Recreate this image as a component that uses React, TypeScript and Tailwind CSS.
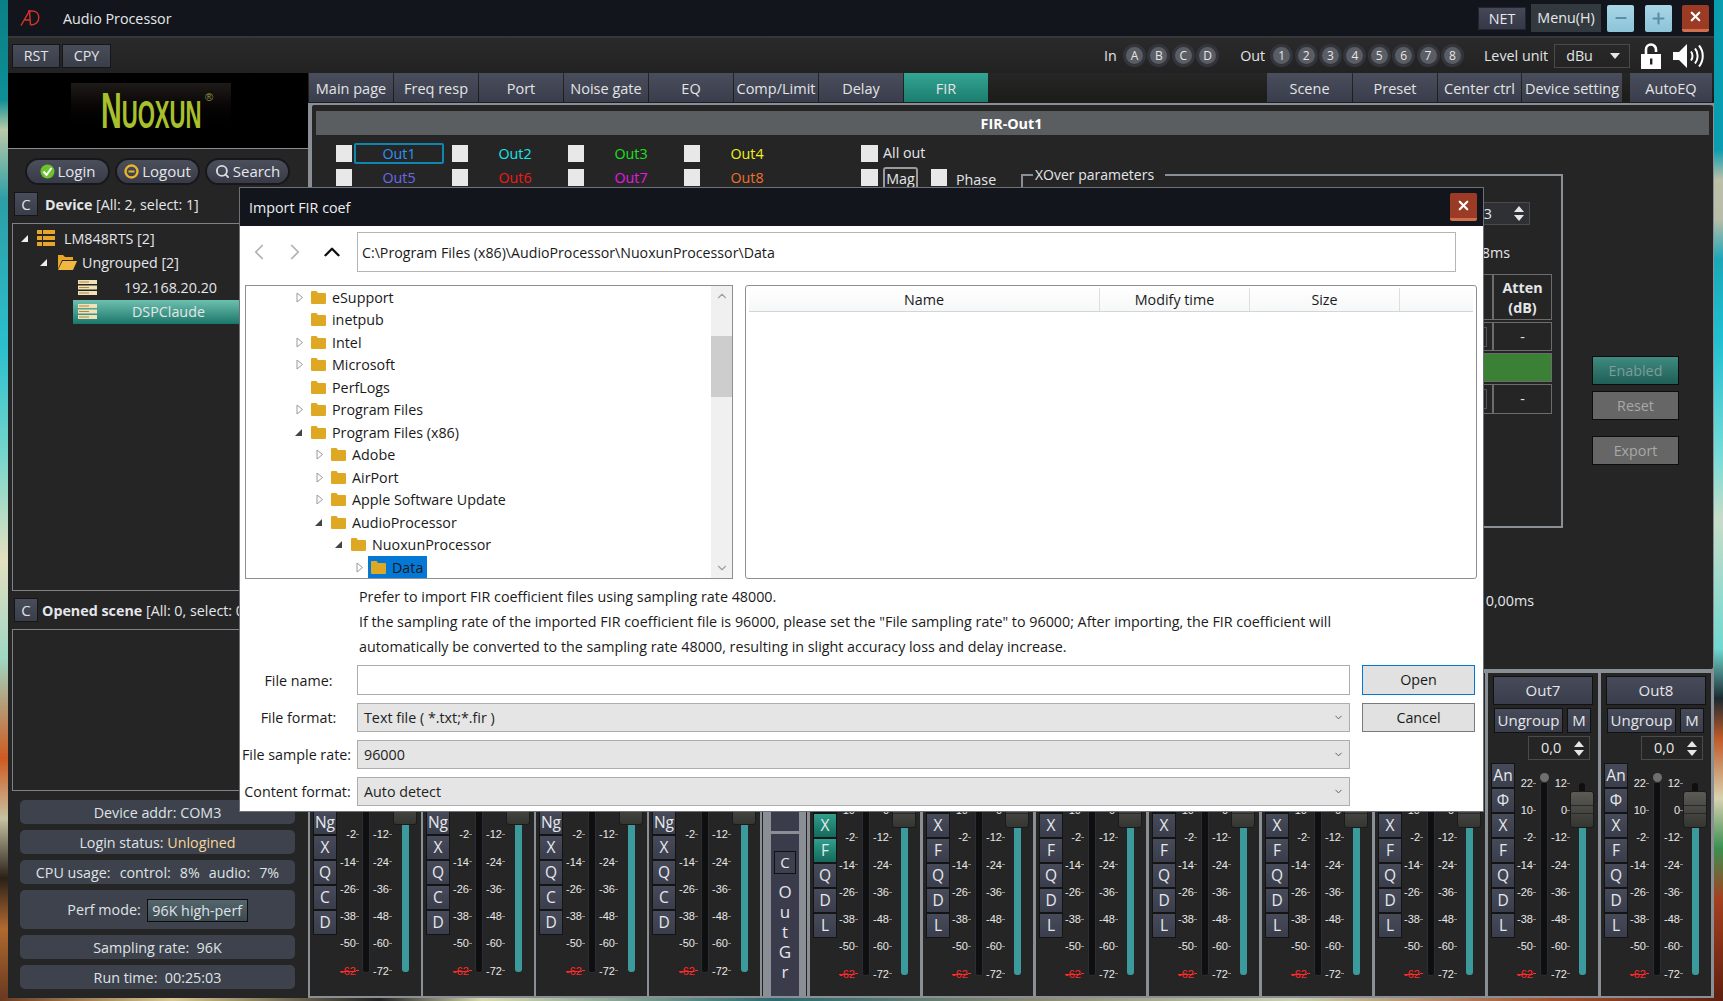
import { ChevronDown, ChevronLeft, ChevronRight, ChevronUp, Search, X, Minus, Plus } from "lucide-react"

const leftTabs = ["Main page", "Freq resp", "Port", "Noise gate", "EQ", "Comp/Limit", "Delay", "FIR"]
const rightTabs = [
  { label: "Scene", width: "w-[85px]" },
  { label: "Preset", width: "w-[84px]" },
  { label: "Center ctrl", width: "w-[83px]" },
  { label: "Device setting", width: "w-[100px]" },
]
const leftScale = ["22", "10", "-2", "-14", "-26", "-38", "-50", "-62"]
const rightScale = ["12", "0", "-12", "-24", "-36", "-48", "-60", "-72"]

const outRows = [
  [
    { name: "Out1", color: "text-[#2a94f4]", selected: true },
    { name: "Out2", color: "text-[#19e6e6]" },
    { name: "Out3", color: "text-[#1fe01f]" },
    { name: "Out4", color: "text-[#f2f21a]" },
  ],
  [
    { name: "Out5", color: "text-[#6a6af0]" },
    { name: "Out6", color: "text-[#f01a1a]" },
    { name: "Out7", color: "text-[#e61ae6]" },
    { name: "Out8", color: "text-[#f0702a]" },
  ],
]

const folderRows = [
  { name: "eSupport", level: 0, arrow: "closed" },
  { name: "inetpub", level: 0 },
  { name: "Intel", level: 0, arrow: "closed" },
  { name: "Microsoft", level: 0, arrow: "closed" },
  { name: "PerfLogs", level: 0 },
  { name: "Program Files", level: 0, arrow: "closed" },
  { name: "Program Files (x86)", level: 0, arrow: "open" },
  { name: "Adobe", level: 1, arrow: "closed" },
  { name: "AirPort", level: 1, arrow: "closed" },
  { name: "Apple Software Update", level: 1, arrow: "closed" },
  { name: "AudioProcessor", level: 1, arrow: "open" },
  { name: "NuoxunProcessor", level: 2, arrow: "open" },
  { name: "Data", level: 3, arrow: "closed", selected: true },
]

const levelPad = ["pl-[50px]", "pl-[70px]", "pl-[90px]", "pl-[110px]"]

function Folder() {
  return (
    <svg width="15" height="13" viewBox="0 0 15 13" className="shrink-0">
      <path d="M1 0h4.5l1.5 2h7a1 1 0 0 1 1 1v9a1 1 0 0 1-1 1H1a1 1 0 0 1-1-1V1a1 1 0 0 1 1-1z" fill="#dfa823" />
    </svg>
  )
}

function TreeArrow({ state }: { state?: string }) {
  if (state === "closed") {
    return (
      <svg width="8" height="11" viewBox="0 0 8 11" className="shrink-0">
        <path d="M1 1l5.5 4.5L1 10z" fill="#fff" stroke="#9a9a9a" />
      </svg>
    )
  }
  if (state === "open") {
    return (
      <svg width="9" height="9" viewBox="0 0 9 9" className="shrink-0 -translate-x-[2px]">
        <path d="M8 1v7H1z" fill="#444" />
      </svg>
    )
  }
  return <span className="w-[8px] shrink-0" />
}

function ServerIcon() {
  return (
    <svg width="19" height="15" viewBox="0 0 19 15" className="shrink-0">
      <rect width="19" height="4" fill="#f0e2b8" />
      <rect y="5.5" width="19" height="4" fill="#f0e2b8" />
      <rect y="11" width="19" height="4" fill="#f0e2b8" />
      <rect x="1" y="1.5" width="10" height="1" fill="#b08a40" />
      <rect x="1" y="7" width="10" height="1" fill="#b08a40" />
      <rect x="1" y="12.5" width="10" height="1" fill="#b08a40" />
    </svg>
  )
}

function Pill({ icon, label }: { icon: React.ReactNode; label: string }) {
  return (
    <button className="flex h-[27px] w-[85px] items-center justify-center gap-[3px] rounded-full border-2 border-[#17181b] bg-gradient-to-b from-[#4b4f5c] to-[#383b47] text-[15px] text-[#e4e6ea]">
      {icon}
      {label}
    </button>
  )
}

function SquareC() {
  return (
    <button className="flex h-[24px] w-[24px] shrink-0 items-center justify-center border border-[#15161a] bg-gradient-to-b from-[#494d5a] to-[#3a3d4a] text-[15px] text-[#dfe2e6]">
      C
    </button>
  )
}

function Circle({ label }: { label: string }) {
  return (
    <span className="flex h-[23px] w-[23px] items-center justify-center rounded-full border-[3px] border-[#33353c] bg-[#5a5d64] text-[12px] text-[#e6e6e6]">
      {label}
    </span>
  )
}

function UpDown() {
  return (
    <span className="flex flex-col items-center gap-[3px]">
      <span className="h-0 w-0 border-x-[5px] border-b-[6px] border-x-transparent border-b-[#e6e6e6]" />
      <span className="h-0 w-0 border-x-[5px] border-t-[6px] border-x-transparent border-t-[#e6e6e6]" />
    </span>
  )
}

// labels the dialog covers stay empty, hidden says how many from the top
function ScaleColumn({ values, width, hidden }: { values: string[]; width: string; hidden: number }) {
  return (
    <div className={`mt-[13px] flex h-[205px] flex-col justify-between font-['Liberation_Sans',sans-serif] text-[11px] ${width}`}>
      {values.map((v, i) => (
        <span key={v} className={`flex h-[14px] items-center justify-end ${v === "-62" ? "text-[#ff2a2a]" : "text-[#e8e8e8]"}`}>
          {i >= hidden && (
            <>
              <span className={v === "-62" ? "line-through" : ""}>{v}</span>
              <span className={`h-px w-[3px] ${v === "-62" ? "bg-[#ff2a2a]" : "bg-[#8d8d8d]"}`} />
            </>
          )}
        </span>
      ))}
    </div>
  )
}

function Strip({ name, kind, active, covered }: { name: string; kind: "in" | "out"; active?: boolean; covered?: boolean }) {
  const keys = kind === "in" ? ["An", "Φ", "Ng", "X", "Q", "C", "D"] : ["An", "Φ", "X", "F", "Q", "D", "L"]
  const hidden = !covered ? 0 : kind === "in" ? 2 : 1
  return (
    <div className={`flex h-full shrink-0 flex-col bg-[#252525] ${kind === "in" ? "w-[111px]" : "w-[110px]"}`}>
      {covered ? (
        <div className="h-[87px] shrink-0" />
      ) : (
        <>
          <button className="mx-[5px] mt-[3px] h-[29px] border border-[#111] bg-gradient-to-b from-[#474b59] to-[#3a3d4b] text-[15px] text-[#e4e6ea]">
            {name}
          </button>
          <div className="mx-[6px] mt-[3px] flex h-[25px] gap-[4px]">
            <button className="w-[69px] border border-[#111] bg-gradient-to-b from-[#474b59] to-[#3a3d4b] text-[15px] text-[#e4e6ea]">Ungroup</button>
            <button className="w-[24px] border border-[#111] bg-gradient-to-b from-[#474b59] to-[#3a3d4b] text-[15px] text-[#e4e6ea]">M</button>
          </div>
          <div className="ml-[40px] mt-[3px] flex h-[24px] w-[62px] items-center justify-between border border-[#4a4a4a] pl-[12px] pr-[5px] text-[14.5px] text-[#e8e8e8]">
            0,0
            <UpDown />
          </div>
        </>
      )}
      <div className={kind === "in" ? "mt-0 flex pl-[3px]" : "mt-[3px] flex pl-[3px]"}>
        <div className="flex w-[24px] shrink-0 flex-col">
          {keys.map((k) => {
            const on = active && (k === "X" || k === "F")
            const blank = covered && (k === "An" || k === "Φ")
            return (
              <button
                key={k}
                className={`flex h-[25px] items-center justify-center border border-[#141414] bg-gradient-to-b text-[15.5px] text-[#e6e8ec] ${
                  on ? "from-[#2fa08c] to-[#146a5c]" : "from-[#474b59] to-[#3a3d4b]"
                }`}
              >
                {blank ? "" : k}
              </button>
            )
          })}
        </div>
        <ScaleColumn values={leftScale} width={kind === "in" ? "w-[22px]" : "w-[21px]"} hidden={hidden} />
        <div className={`mt-[10px] flex w-[8px] shrink-0 flex-col items-center ${kind === "in" ? "ml-[3px]" : "ml-[4px]"}`}>
          <span className="h-[9px] w-[9px] rounded-full bg-[#6f6f6f]" />
          <span className="h-[194px] w-[8px] rounded-b-[3px] border border-[#2a2d36] bg-[#0f0f10]" />
        </div>
        <ScaleColumn values={rightScale} width="w-[22px]" hidden={hidden} />
        <div className={`mt-[20px] flex w-[24px] shrink-0 flex-col items-center ${kind === "in" ? "ml-px" : ""}`}>
          <span className="h-[8px] w-[6px] rounded-t-[3px] bg-[#0f0f10]" />
          <span className="flex h-[37px] w-[24px] flex-col justify-center gap-[7px] rounded-[3px] border border-[#1b1b1b] bg-gradient-to-b from-[#5c5b56] to-[#353532]">
            <span className="h-px bg-[#2a2a28]" />
            <span className="h-px bg-[#2a2a28]" />
          </span>
          <span className="h-[147px] w-[7px] rounded-b-[3px] bg-[#3a9a9c]" />
        </div>
      </div>
    </div>
  )
}

function FormSelect({ value }: { value: string }) {
  return (
    <div className="flex h-[29px] items-center justify-between border border-[#adadad] bg-[#e5e5e5] pl-[6px] pr-[5px] text-[#222]">
      {value}
      <ChevronDown size={11} className="text-[#555]" />
    </div>
  )
}

function Dialog() {
  return (
    <div className="absolute left-[239px] top-[187px] flex h-[625px] w-[1245px] flex-col border border-[#6e7278] bg-white text-[14.3px] text-[#1a1a1a]">
      <div className="flex h-[38px] shrink-0 items-center justify-between bg-[#12161c] pl-[9px] pr-[6px] text-[#eceef0]">
        <span className="pt-px">Import FIR coef</span>
        <button className="flex h-[28px] w-[27px] items-center justify-center rounded-[2px] border-b-[3px] border-[#cf6f4e] bg-[#9b3a25] text-white">
          <X size={15} strokeWidth={3.5} />
        </button>
      </div>
      <div className="ml-[6px] mt-[6px] flex h-[40px] items-center">
        <ChevronLeft size={26} strokeWidth={1.6} className="text-[#b0b0b0]" />
        <ChevronRight size={26} strokeWidth={1.6} className="ml-[10px] text-[#b0b0b0]" />
        <ChevronUp size={26} strokeWidth={2.2} className="ml-[11px] text-[#111]" />
        <div className="ml-[12px] flex h-[40px] w-[1099px] items-center border border-[#b5b5b5] pl-[4px] pt-px text-[14.2px]">
          C:\Program Files (x86)\AudioProcessor\NuoxunProcessor\Data
        </div>
      </div>
      <div className="ml-[5px] mt-[13px] flex h-[294px] gap-[12px]">
        <div className="flex w-[488px] border border-[#8c8f94]">
          <div className="flex-1 overflow-hidden">
            {folderRows.map((row) => (
              <div key={row.name} className={`flex h-[22.5px] items-center ${levelPad[row.level]}`}>
                <span className="flex w-[15px] shrink-0">
                  <TreeArrow state={row.arrow} />
                </span>
                {row.selected ? (
                  <span className="-ml-[3px] flex h-[22px] items-center gap-[6px] bg-[#0378d7] pl-[3px] pr-[4px]">
                    <Folder />
                    Data
                  </span>
                ) : (
                  <span className="flex items-center gap-[6px]">
                    <Folder />
                    {row.name}
                  </span>
                )}
              </div>
            ))}
          </div>
          <div className="flex w-[21px] flex-col items-center justify-between bg-[#f0f0f0] text-[#a0a0a0]">
            <ChevronUp size={14} className="mt-[3px]" />
            <span className="mb-auto mt-[33px] h-[61px] w-full bg-[#cdcdcd]" />
            <ChevronDown size={14} className="mb-[3px]" />
          </div>
        </div>
        <div className="w-[732px] rounded-[3px] border border-[#8c8f94] px-[3px] pt-px">
          <div className="flex h-[25px] border-b border-[#d5d5d5] bg-gradient-to-b from-white to-[#f6f7f8] pt-px">
            <span className="flex w-[351px] items-center justify-center border-r border-[#dedede]">Name</span>
            <span className="flex w-[150px] items-center justify-center border-r border-[#dedede]">Modify time</span>
            <span className="flex w-[150px] items-center justify-center border-r border-[#dedede]">Size</span>
          </div>
        </div>
      </div>
      <div className="pl-[119px] pt-[5px] leading-[25px]">
        <p>Prefer to import FIR coefficient files using sampling rate 48000.</p>
        <p>If the sampling rate of the imported FIR coefficient file is 96000, please set the "File sampling rate" to 96000; After importing, the FIR coefficient will</p>
        <p>automatically be converted to the sampling rate 48000, resulting in slight accuracy loss and delay increase.</p>
      </div>
      <div className="mt-[6px] grid grid-cols-[117px_993px_125px] gap-y-[8px]">
        <span className="flex h-[30px] items-center justify-center whitespace-nowrap pt-px">File name:</span>
        <div className="h-[30px] border border-[#adadad] bg-white" />
        <button className="ml-[12px] h-[30px] w-[113px] border border-[#0078d7] bg-[#e1e1e1]">Open</button>
        <span className="flex h-[29px] items-center justify-center whitespace-nowrap">File format:</span>
        <FormSelect value="Text file ( *.txt;*.fir )" />
        <button className="ml-[12px] h-[29px] w-[113px] border border-[#7a7a7a] bg-[#e1e1e1]">Cancel</button>
        <span className="-ml-[4px] flex h-[29px] items-center justify-center whitespace-nowrap">File sample rate:</span>
        <FormSelect value="96000" />
        <span />
        <span className="-ml-[2px] flex h-[29px] items-center justify-center whitespace-nowrap">Content format:</span>
        <FormSelect value="Auto detect" />
        <span />
      </div>
    </div>
  )
}

export default function App() {
  const rowBg = "flex items-center justify-center rounded-[5px] bg-[#3e424c] pt-px text-[14.3px] text-[#dfe2e6]"
  return (
    <div className="relative flex h-[1001px] w-[1723px] flex-col overflow-hidden bg-[#222] font-['Open_Sans',sans-serif]">
      <div className="flex h-[998px]">
        <div className="w-[8px] bg-[linear-gradient(180deg,#0b7f86_0%,#0e8f96_10%,#b9c9a8_13%,#2c9ea6_20%,#2cc0ce_35%,#7ad6cc_46%,#e4e0c0_56%,#9fd6c4_66%,#cf5a20_76%,#c6c2a2_82%,#2a2018_88%,#b06a30_93%,#6a3a20_100%)]" />
        <div className="flex w-[1706px] flex-col">
          <div className="flex h-[38px] shrink-0 items-center border-b-2 border-[#33363a] bg-[#12161c] pl-[12px] pr-[5px] text-[14.3px] text-[#e6e8ea]">
            <svg width="20" height="16" viewBox="0 0 20 16" fill="none" stroke="#d8322a" strokeWidth="1.4">
              <path d="M1 15.5 9.5.8l1 14.4M4.5 10h6" />
              <path d="M8 1h4c4.5 0 6.8 3 6.8 6.6 0 4-2.8 7.4-8 7.4" />
            </svg>
            <span className="ml-[23px] pt-px">Audio Processor</span>
            <button className="ml-auto h-[23px] w-[48px] border border-[#232630] bg-gradient-to-b from-[#444857] to-[#353846]">NET</button>
            <button className="ml-[5px] h-[28px] w-[70px] bg-[#333a3f]">Menu(H)</button>
            <button className="ml-[6px] flex h-[27px] w-[27px] items-center justify-center rounded-[2px] bg-gradient-to-b from-[#a8d6e6] to-[#8cc4d8] text-[#5b8ea6]">
              <Minus size={16} strokeWidth={3} />
            </button>
            <button className="ml-[11px] flex h-[27px] w-[27px] items-center justify-center rounded-[2px] bg-gradient-to-b from-[#a8d6e6] to-[#8cc4d8] text-[#5b8ea6]">
              <Plus size={17} strokeWidth={3} />
            </button>
            <button className="ml-[10px] flex h-[27px] w-[27px] items-center justify-center rounded-[2px] border-b-[3px] border-[#cf6f4e] bg-[#9b3a25] text-white">
              <X size={15} strokeWidth={3.5} />
            </button>
          </div>
          <div className="flex h-[35px] shrink-0 items-center bg-gradient-to-b from-[#2a2a2a] to-[#222] pl-[4px] text-[14.3px] text-[#e2e4e6]">
            <button className="h-[24px] w-[48px] border border-[#15161a] bg-gradient-to-b from-[#494d5a] to-[#3a3d4a]">RST</button>
            <button className="ml-[2px] h-[24px] w-[49px] border border-[#15161a] bg-gradient-to-b from-[#494d5a] to-[#3a3d4a]">CPY</button>
            <span className="ml-[993px] w-[18px]">In</span>
            <div className="ml-[1px] flex gap-[1.4px]">
              {["A", "B", "C", "D"].map((k) => (
                <Circle key={k} label={k} />
              ))}
            </div>
            <span className="ml-[21px]">Out</span>
            <div className="ml-[5px] flex gap-[1.4px]">
              {["1", "2", "3", "4", "5", "6", "7", "8"].map((k) => (
                <Circle key={k} label={k} />
              ))}
            </div>
            <span className="ml-[20px]">Level unit</span>
            <div className="ml-[6px] flex h-[24px] w-[76px] items-center justify-between border border-[#4a4a4a] pl-[11px] pr-[9px]">
              dBu
              <span className="h-0 w-0 border-x-[5px] border-t-[6px] border-x-transparent border-t-[#e6e6e6]" />
            </div>
            <svg width="22" height="26" viewBox="0 0 22 26" className="ml-[10px]" fill="none">
              <path d="M16 9V6.5a5 5 0 0 0-10 0V11" stroke="#fff" strokeWidth="2.6" />
              <rect x="1" y="11" width="20" height="15" fill="#fff" />
              <rect x="10" y="15.5" width="2.4" height="6" fill="#222" />
            </svg>
            <svg width="32" height="26" viewBox="0 0 32 26" className="ml-[10px]" fill="none">
              <path d="M1 9h6l8-8v24l-8-8H1z" fill="#fff" />
              <path d="M19 8.5c2 2.5 2 6.500 0 9M23 5.500c3.500 4 3.500 11 0 15M27 2.500c5 6 5 15 0 21" stroke="#fff" strokeWidth="2" />
            </svg>
          </div>
          <div className="flex min-h-0 flex-1">
            <aside className="flex w-[300px] shrink-0 flex-col bg-[#252525] text-[14.3px] text-[#e4e6ea]">
              <div className="flex h-[76px] shrink-0 items-center justify-center border-b border-[#8a8f96] bg-black pr-[14px]">
                <div className="relative flex h-[56px] w-[160px] items-center justify-center bg-gradient-to-b from-[#1e1a18] to-black font-['Liberation_Sans',sans-serif] font-bold text-[#a8c02c]">
                  <span className="flex origin-center scale-x-[0.65] scale-y-[1.15] items-baseline">
                    <span className="text-[44px] leading-none">N</span>
                    <span className="text-[34px] leading-none">UOXUN</span>
                  </span>
                  <span className="absolute right-[18px] top-[9px] text-[11px] font-normal leading-none text-[#8c9a40]">®</span>
                </div>
              </div>
              <div className="ml-[17px] mt-[9px] flex gap-[5px]">
                <Pill
                  label="Login"
                  icon={
                    <svg width="15" height="15" viewBox="0 0 15 15">
                      <circle cx="7.500" cy="7.500" r="7" fill="#6cc42c" />
                      <path d="M3.500 7.500 6.500 11l5-7" fill="none" stroke="#fff" strokeWidth="2" />
                    </svg>
                  }
                />
                <Pill
                  label="Logout"
                  icon={
                    <svg width="15" height="15" viewBox="0 0 15 15">
                      <circle cx="7.500" cy="7.500" r="6" fill="none" stroke="#e8b52c" strokeWidth="2.400" />
                      <rect x="4.500" y="6.500" width="6" height="2" fill="#e8b52c" />
                    </svg>
                  }
                />
                <Pill label="Search" icon={<Search size={15} strokeWidth={3} className="text-[#d8dce0]" />} />
              </div>
              <div className="ml-[6px] mt-[7px] flex items-center gap-[7px]">
                <SquareC />
                <span className="pt-px">
                  <b>Device</b> [All: 2, select: 1]
                </span>
              </div>
              <div className="ml-[4px] mt-[7px] h-[368px] w-[292px] border border-[#7e8287] pt-[2px]">
                <div className="flex h-[24.5px] items-center pl-[7px]">
                  <svg width="9" height="9" viewBox="0 0 9 9"><path d="M8 1v7H1z" fill="#eee" /></svg>
                  <svg width="18" height="16" viewBox="0 0 18 16" className="ml-[8px]" fill="#e8a52a">
                    <rect width="5" height="4" />
                    <rect x="6" width="12" height="4" />
                    <rect y="6" width="5" height="4" />
                    <rect x="6" y="6" width="12" height="4" />
                    <rect y="12" width="5" height="4" />
                    <rect x="6" y="12" width="12" height="4" />
                  </svg>
                  <span className="ml-[9px]">LM848RTS [2]</span>
                </div>
                <div className="flex h-[24.5px] items-center pl-[26px]">
                  <svg width="9" height="9" viewBox="0 0 9 9"><path d="M8 1v7H1z" fill="#eee" /></svg>
                  <svg width="20" height="15" viewBox="0 0 20 15" className="ml-[9px]">
                    <path d="M1 0h5l2 2h8v3H5L1 14z" fill="#e8a52a" />
                    <path d="M5.500 6H20l-4 9H1z" fill="#f0b840" />
                  </svg>
                  <span className="ml-[5px]">Ungrouped [2]</span>
                </div>
                <div className="flex h-[24.5px] items-center pl-[65px]">
                  <ServerIcon />
                  <span className="ml-[27px]">192.168.20.20</span>
                </div>
                <div className="ml-[60px] flex h-[24.5px] items-center bg-gradient-to-b from-[#6cc0b0] to-[#16786a] pl-[5px]">
                  <ServerIcon />
                  <span className="ml-[35px]">DSPClaude</span>
                </div>
              </div>
              <div className="ml-[6px] mt-[7px] flex items-center gap-[4px]">
                <SquareC />
                <span className="whitespace-nowrap pt-[2px]">
                  <b>Opened scene</b> [All: 0, select: 0]
                </span>
              </div>
              <div className="ml-[4px] mt-[7px] h-[162px] w-[292px] border border-[#7e8287]" />
              <div className="ml-[12px] mt-[9px] flex w-[275px] flex-col gap-[6px]">
                <div className={`h-[24px] ${rowBg}`}>Device addr: COM3</div>
                <div className={`h-[24px] ${rowBg}`}>
                  Login status:&nbsp;<span className="text-[#f2d79c]">Unlogined</span>
                </div>
                <div className={`h-[24px] gap-[9px] ${rowBg}`}>
                  <span>CPU usage:</span>
                  <span>control:</span>
                  <span>8%</span>
                  <span>audio:</span>
                  <span>7%</span>
                </div>
                <div className={`h-[39px] gap-[6px] ${rowBg}`}>
                  Perf mode:
                  <button className="h-[23px] w-[101px] border border-[#0d0d0d] bg-gradient-to-b from-[#54666c] to-[#3c4a50]">96K high-perf</button>
                </div>
                <div className={`h-[24px] ${rowBg}`}>Sampling rate:&nbsp; 96K</div>
                <div className={`h-[24px] ${rowBg}`}>Run time:&nbsp; 00:25:03</div>
              </div>
            </aside>
            <main className="flex min-w-0 flex-1 flex-col bg-[#8a8f96]">
              <div className="flex h-[30px] shrink-0 bg-gradient-to-b from-[#262626] to-[#1b1b19] pl-px text-[14.5px] text-[#e2e4e6]">
                {leftTabs.map((tab) => (
                  <button
                    key={tab}
                    className={`mr-px w-[84px] whitespace-nowrap border-b border-[#1c1d22] bg-gradient-to-b pt-[2px] ${
                      tab === "FIR" ? "from-[#34a594] to-[#1c7d6e]" : "from-[#4a4e5c] to-[#3a3d4b]"
                    }`}
                  >
                    {tab}
                  </button>
                ))}
                <span className="flex-1" />
                {rightTabs.map((tab) => (
                  <button key={tab.label} className={`mr-px whitespace-nowrap border-b border-[#1c1d22] bg-gradient-to-b from-[#4a4e5c] to-[#3a3d4b] pt-[2px] ${tab.width}`}>
                    {tab.label}
                  </button>
                ))}
                <button className="ml-[7px] mr-[2px] w-[82px] border-b border-[#1c1d22] bg-gradient-to-b from-[#4a4e5c] to-[#3a3d4b] pt-[2px]">AutoEQ</button>
              </div>
              <section className="ml-[2px] flex h-[568px] shrink-0 flex-col rounded-t-[4px] rounded-br-[4px] border-2 border-r-[1px] border-[#8a8f96] bg-[#252525] text-[14.3px] text-[#e4e6ea]">
                <div className="mx-[4px] mt-[6px] flex h-[24px] shrink-0 items-center justify-center bg-[#5a5e61] pr-[2px] pt-px font-bold text-white">FIR-Out1</div>
                <div className="flex flex-1">
                  <div className="w-[709px] pl-[24px] pt-[10px]">
                    {outRows.map((row, r) => (
                      <div key={r} className={`flex ${r === 0 ? "h-[17px]" : "mt-[7px] h-[17px]"}`}>
                        {row.map((o) => (
                          <div key={o.name} className="flex w-[116px] items-center">
                            <span className="h-[17px] w-[16px] shrink-0 bg-[#e8e8e8]" />
                            <span
                              className={`ml-[2px] flex h-[21px] w-[90px] items-center justify-center ${o.color} ${
                                o.selected ? "rounded-[2px] border-2 border-[#0e86b0]" : ""
                              }`}
                            >
                              {o.name}
                            </span>
                          </div>
                        ))}
                        {r === 0 ? (
                          <div className="ml-[61px] flex items-center">
                            <span className="h-[17px] w-[17px] bg-[#e8e8e8]" />
                            <span className="ml-[5px] -translate-y-px">All out</span>
                          </div>
                        ) : (
                          <div className="ml-[61px] flex items-center">
                            <span className="h-[17px] w-[17px] bg-[#e8e8e8]" />
                            <span className="ml-[5px] flex h-[24px] w-[35px] translate-y-px items-center justify-center rounded-t-[3px] border-2 border-[#9a9a9a]">Mag</span>
                            <span className="ml-[13px] h-[17px] w-[16px] bg-[#e8e8e8]" />
                            <span className="ml-[9px] translate-y-[2px]">Phase</span>
                          </div>
                        )}
                      </div>
                    ))}
                  </div>
                  <div className="flex w-[542px] flex-col">
                    <div className="relative mt-[39px] flex h-[354px] flex-col items-end border-2 border-[#8a8f96]">
                      <span className="absolute -top-[12px] left-[10px] bg-[#252525] pl-[2px] pr-[11px] text-[14px]">XOver parameters</span>
                      <div className="mr-[31px] mt-[26px] flex h-[23px] w-[120px] items-center justify-end border border-[#4a4a4a] bg-[#2f3036] pr-[5px]">
                        <span className="mr-[22px]">33</span>
                        <UpDown />
                      </div>
                      <span className="mr-[51px] mt-[17px] h-[20px]">8ms</span>
                      <div className="mr-[9px] mt-[12px] grid w-[300px] grid-cols-[1fr_59px] gap-y-[2px] text-center">
                        <div className="h-[46px] border border-[#6c6c6c]" />
                        <div className="h-[46px] border border-[#6c6c6c] pt-[3px] font-bold leading-[20px]">
                          Atten
                          <br />
                          (dB)
                        </div>
                        <div className="flex h-[29px] items-center justify-end border border-[#6c6c6c] pr-[5px]">
                          <span className="h-[20px] w-[5px] border border-[#555]" />
                        </div>
                        <div className="h-[29px] border border-[#6c6c6c] leading-[27px]">-</div>
                        <div className="col-span-2 h-[29px] border border-[#6c6c6c] bg-[#3a8035]" />
                        <div className="flex h-[30px] items-center justify-end border border-[#6c6c6c] pr-[5px]">
                          <span className="h-[20px] w-[5px] border border-[#555]" />
                        </div>
                        <div className="h-[30px] border border-[#6c6c6c] leading-[28px]">-</div>
                      </div>
                    </div>
                    <span className="mr-[29px] mt-[62px] self-end">0,00ms</span>
                  </div>
                  <div className="ml-[29px] mt-[221px] flex w-[87px] flex-col">
                    <button className="h-[29px] border border-[#0d0d0d] bg-gradient-to-b from-[#3f8a80] to-[#1f5f58] text-[#7d9c98]">Enabled</button>
                    <button className="mt-[6px] h-[29px] border border-[#0d0d0d] bg-[#666] text-[#a8a8a8]">Reset</button>
                    <button className="mt-[16px] h-[29px] border border-[#0d0d0d] bg-[#666] text-[#a8a8a8]">Export</button>
                  </div>
                </div>
              </section>
              <div className="flex h-[326px] items-stretch pb-px pl-[2px] pt-[2px]">
                <div className="flex gap-[2px]">
                  {["InA", "InB", "InC", "InD"].map((n) => (
                    <Strip key={n} name={n} kind="in" covered />
                  ))}
                </div>
                <span className="ml-[2px] w-px bg-[#222]" />
                <div className="ml-[8px] mr-[7px] flex w-[28px] flex-col items-center bg-[#3a3c4c] text-[17px] text-[#e4e6ea]">
                  <span className="h-[161px] w-full shrink-0 border-b-[3px] border-[#8a8f96]" />
                  <button className="mt-[17px] flex h-[23px] w-[22px] items-center justify-center border border-[#111] bg-[#3d404e] text-[15px]">C</button>
                  <div className="mt-[8px] flex flex-col items-center leading-[20px]">
                    {["O", "u", "t", "G", "r"].map((c) => (
                      <span key={c}>{c}</span>
                    ))}
                  </div>
                </div>
                <span className="mr-[3px] w-px bg-[#222]" />
                <div className="flex gap-[3px]">
                  {["Out1", "Out2", "Out3", "Out4", "Out5", "Out6", "Out7", "Out8"].map((n, i) => (
                    <Strip key={n} name={n} kind="out" active={i === 0} covered={i < 6} />
                  ))}
                </div>
              </div>
            </main>
          </div>
        </div>
        <div className="flex-1 bg-[linear-gradient(180deg,#0a9db0_0%,#0a9db0_15%,#bdbfa8_18%,#b8bca8_22%,#1aa8b8_26%,#20c0d0_34%,#7adcd8_46%,#c8dcc8_52%,#70d8d0_65%,#1a2a30_70%,#c05a28_74%,#d9d2b0_80%,#3a9050_85%,#a44020_90%,#602010_100%)]" />
      </div>
      <div className="h-[3px] bg-[linear-gradient(90deg,#6a3a20_0%,#d9c890_10%,#222_22%,#d8d8b0_28%,#2a6a70_45%,#8a8a70_60%,#c8d0b0_75%,#a05030_90%,#602010_100%)]" />
      <Dialog />
    </div>
  )
}
